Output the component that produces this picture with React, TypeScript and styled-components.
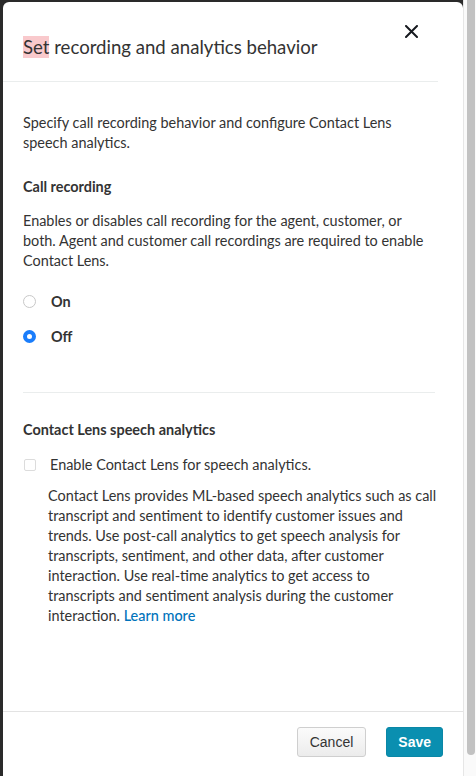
import React from "react";
import styled, { createGlobalStyle } from "styled-components";

const Global = createGlobalStyle`
  html, body { margin: 0; padding: 0; background: #2a2a2a; height: 100%; }
  #root { height: 100%; }
  * { box-sizing: border-box; }
`;

const Page = styled.div`
  display: flex;
  height: 776px;
  padding-left: 3px;
  overflow: hidden;
`;

const Modal = styled.div`
  width: 460px;
  margin-top: 2px;
  background: #fff;
  border-radius: 6px 6px 0 0;
  display: flex;
  flex-direction: column;
  font-family: Lato, "Liberation Sans", sans-serif;
  color: #333;
`;

const Track = styled.div`
  width: 13px;
  background: #fafafa;
  border-left: 1px solid #e6e6e6;
  padding: 0 1px 0 3px;
`;

const Thumb = styled.div`
  height: 755px;
  background: #c2c2c2;
  border-radius: 0 0 4px 4px;
`;

const Header = styled.div`
  display: flex;
  justify-content: space-between;
  align-items: flex-start;
  height: 80px;
  margin-right: 25px;
  border-bottom: 1px solid #eaeded;
  padding: 33px 19px 0 20px;
`;

const Title = styled.h2`
  margin: 0;
  font-size: 18.6px;
  font-weight: 400;
  line-height: 24px;
  color: #333;
`;

const Mark = styled.span`
  background: #f9c9cc;
`;

const Close = styled.button`
  border: none;
  background: none;
  padding: 0;
  margin: -12px 0 0 0;
  width: 16px;
  height: 16px;
  display: flex;
  align-items: center;
  justify-content: center;
  cursor: pointer;
`;

const Body = styled.div`
  flex: 1;
  padding: 31px 24px 0 20px;
`;

const Para = styled.p<{ $mt?: number; $max?: number }>`
  margin: ${(p) => p.$mt ?? 0}px 0 0;
  max-width: ${(p) => (p.$max ? `${p.$max}px` : "none")};
  font-size: 14.45px;
  line-height: 20px;
  color: #333;
`;

const SectionTitle = styled.h3<{ $mt: number }>`
  margin: ${(p) => p.$mt}px 0 0;
  font-size: 14.45px;
  font-weight: 700;
  line-height: 20px;
  color: #333;
`;

const RadioGroup = styled.div`
  display: flex;
  flex-direction: column;
  gap: 15px;
  margin-top: 20px;
`;

const RadioRow = styled.label`
  display: flex;
  align-items: center;
  height: 20px;
  font-size: 14.45px;
  font-weight: 700;
  color: #333;
`;

const RadioDot = styled.span<{ $on?: boolean }>`
  width: 13px;
  height: 13px;
  border-radius: 50%;
  margin: 0 15px 0 0;
  border: ${(p) => (p.$on ? "4px solid #1a7dfb" : "1px solid #c8c8c8")};
  background: #fff;
  flex: none;
`;

const Divider = styled.div`
  height: 1px;
  background: #eaeded;
  margin: 46px 4px 0 0;
`;

const CheckRow = styled.label`
  display: flex;
  align-items: center;
  margin-top: 15px;
  font-size: 14.45px;
  line-height: 20px;
  color: #333;
`;

const CheckBox = styled.span`
  width: 12px;
  height: 12px;
  border: 1px solid #dcdcdc;
  border-radius: 2px;
  margin: 0 14px 0 1px;
  flex: none;
`;

const Indented = styled.div`
  padding-left: 25px;
  margin-top: 11px;
`;

const Link = styled.a`
  color: #0073bb;
  text-decoration: none;
  font-weight: 500;
`;

const Footer = styled.div`
  height: 65px;
  border-top: 1px solid #e3e3e3;
  display: flex;
  justify-content: flex-end;
  align-items: flex-start;
  gap: 20px;
  padding: 15px 20px 0 0;
`;

const Button = styled.button<{ $primary?: boolean }>`
  height: 30px;
  padding: 0 ${(p) => (p.$primary ? 11 : 12)}px;
  font-family: "Liberation Sans", Arial, sans-serif;
  font-size: 14px;
  border-radius: 3px;
  cursor: pointer;
  color: ${(p) => (p.$primary ? "#fff" : "#333")};
  font-weight: ${(p) => (p.$primary ? 700 : 400)};
  border: 1px solid ${(p) => (p.$primary ? "#0a87a6" : "#cfcfcf")};
  background: ${(p) =>
    p.$primary ? "#0a8fb0" : "linear-gradient(#fbfbfb, #ececec)"};
`;

export default function App() {
  return (
    <>
      <Global />
      <Page>
        <Modal>
          <Header>
            <Title>
              <Mark>Set</Mark> recording and analytics behavior
            </Title>
            <Close aria-label="Close">
              <svg width="13" height="13" viewBox="0 0 13 13">
                <path d="M1 1L12 12M12 1L1 12" stroke="#16191f" strokeWidth="2" strokeLinecap="round" />
              </svg>
            </Close>
          </Header>
          <Body>
            <Para $max={400}>
              Specify call recording behavior and configure Contact Lens speech analytics.
            </Para>
            <SectionTitle $mt={24}>Call recording</SectionTitle>
            <Para $mt={14}>
              Enables or disables call recording for the agent, customer, or
              <br />
              both. Agent and customer call recordings are required to enable Contact Lens.
            </Para>
            <RadioGroup>
              <RadioRow>
                <RadioDot />
                On
              </RadioRow>
              <RadioRow>
                <RadioDot $on />
                Off
              </RadioRow>
            </RadioGroup>
            <Divider />
            <SectionTitle $mt={27}>Contact Lens speech analytics</SectionTitle>
            <CheckRow>
              <CheckBox />
              Enable Contact Lens for speech analytics.
            </CheckRow>
            <Indented>
              <Para>
                Contact Lens provides ML-based speech analytics such as call transcript and
                sentiment to identify customer issues and trends. Use post-call analytics to get
                speech analysis for transcripts, sentiment, and other data, after customer
                interaction. Use real-time analytics to get access to transcripts and sentiment
                analysis during the customer interaction. <Link href="#">Learn more</Link>
              </Para>
            </Indented>
          </Body>
          <Footer>
            <Button>Cancel</Button>
            <Button $primary>Save</Button>
          </Footer>
        </Modal>
        <Track>
          <Thumb />
        </Track>
      </Page>
    </>
  );
}
